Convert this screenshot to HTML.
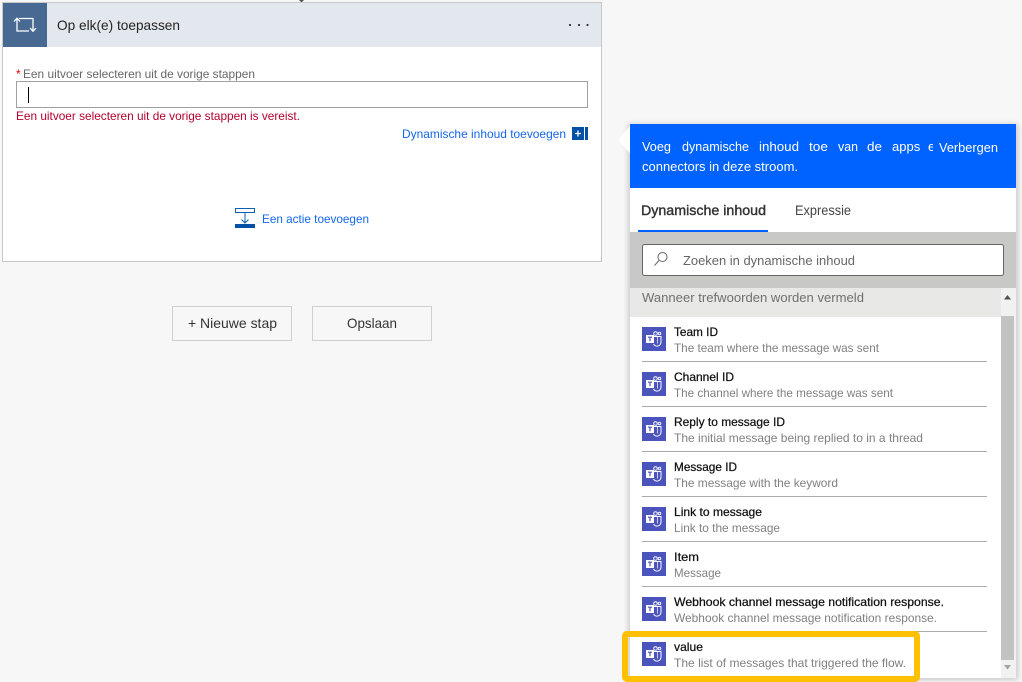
<!DOCTYPE html>
<html lang="nl"><head><meta charset="utf-8"><title>Op elk(e) toepassen</title>
<style>
html,body{margin:0;padding:0;background:#f7f7f7;width:1022px;height:682px;overflow:hidden}
svg{display:block}
text{font-family:"Liberation Sans",sans-serif;font-size:12px}
.h{stroke:#111;stroke-width:.25px}
</style></head><body>
<svg width="1022" height="682" viewBox="0 0 1022 682" xmlns="http://www.w3.org/2000/svg">
<defs>
<filter id="sh" x="-10%" y="-10%" width="120%" height="120%"><feGaussianBlur stdDeviation="3"/></filter>
<g id="t">
<rect width="24" height="24" fill="#4b53bc"/>
<path d="M11 9.500h8v5.500a4 4 0 0 1-7.500 2" fill="none" stroke="#fff" stroke-width="1"/>
<path d="M15.500 9.500v7" fill="none" stroke="#fff" stroke-width=".7"/>
<circle cx="13.500" cy="6.500" r="1.800" fill="none" stroke="#fff" stroke-width="1"/>
<circle cx="17.500" cy="6.500" r="1.300" fill="none" stroke="#fff" stroke-width=".9"/>
<rect x="4" y="8" width="8" height="8" fill="#fff"/>
<path d="M6 10.200h4M8 10.200v4" stroke="#4b53bc" stroke-width="1.200" fill="none"/>
</g>
</defs>
<rect width="1022" height="682" fill="#f7f7f7"/>
<path d="M299 0l2.500 2.500 2.500-2.500z" fill="#555"/>

<!-- card -->
<rect x="2.500" y="2.500" width="599" height="259" fill="#fff" stroke="#c8c8c8"/>
<rect x="3" y="3" width="598" height="44" fill="#e3e7ee"/>
<rect x="3" y="3" width="44" height="44" fill="#486991"/>
<path d="M17 19v12h12M19 18.500h14v12.500" fill="none" stroke="#fff" stroke-width="1.300"/>
<path d="M14 21.500l3-3.300 3 3.300M30 28l3 3.300 3-3.300" fill="none" stroke="#fff" stroke-width="1.300"/>
<text x="57" y="30" style="font-size:14px" fill="#252423" textLength="123" lengthAdjust="spacingAndGlyphs">Op elk(e) toepassen</text>
<circle cx="570" cy="25" r="1.100" fill="#333"/><circle cx="579" cy="25" r="1.100" fill="#333"/><circle cx="587.500" cy="25" r="1.100" fill="#333"/>

<text x="16" y="78" fill="#e00000">*</text>
<text x="23" y="78" fill="#666" textLength="232" lengthAdjust="spacingAndGlyphs">Een uitvoer selecteren uit de vorige stappen</text>
<rect x="16.500" y="81.500" width="571" height="26" fill="#fff" stroke="#a0a0a0"/>
<rect x="28" y="87" width="1" height="16" fill="#000"/>
<text x="16" y="120" fill="#b3002d" textLength="284" lengthAdjust="spacingAndGlyphs">Een uitvoer selecteren uit de vorige stappen is vereist.</text>
<text x="402" y="138" fill="#1566f0" textLength="164" lengthAdjust="spacingAndGlyphs">Dynamische inhoud toevoegen</text>
<rect x="572" y="127" width="12" height="13" fill="#0050a8"/>
<rect x="585" y="127" width="3" height="13" fill="#0050a8"/>
<path d="M575 133.500h6M578 130.500v6" stroke="#fff" stroke-width="1.300"/>

<!-- add action -->
<rect x="235.500" y="208.500" width="19" height="4" fill="#fff" stroke="#0a5fb4"/>
<path d="M245 213v10M241.500 219.500l3.500 3.500 3.500-3.500" fill="none" stroke="#0a5fb4"/>
<rect x="235" y="224" width="20" height="4" fill="#0050a8"/>
<text x="262" y="223" fill="#1566f0" textLength="107" lengthAdjust="spacingAndGlyphs">Een actie toevoegen</text>

<!-- buttons -->
<rect x="172.500" y="306.500" width="119" height="34" fill="#f7f7f7" stroke="#cfcfcf"/>
<rect x="312.500" y="306.500" width="119" height="34" fill="#f7f7f7" stroke="#cfcfcf"/>
<text x="188" y="328" style="font-size:14px" fill="#333" textLength="89" lengthAdjust="spacingAndGlyphs">+ Nieuwe stap</text>
<text x="347" y="328" style="font-size:14px" fill="#333" textLength="50" lengthAdjust="spacingAndGlyphs">Opslaan</text>

<!-- panel -->
<rect x="628" y="124" width="390" height="556" fill="#000" opacity=".18" filter="url(#sh)"/>
<rect x="630" y="124" width="386" height="554" fill="#fff"/>
<path d="M630 126L618 140L630 153z" fill="#fff"/>
<rect x="630" y="124" width="386" height="64" fill="#0062ff"/>
<g fill="#fff">
<text x="642" y="151" style="font-size:13px" textLength="29" lengthAdjust="spacingAndGlyphs">Voeg</text>
<text x="682" y="151" style="font-size:13px" textLength="67" lengthAdjust="spacingAndGlyphs">dynamische</text>
<text x="759" y="151" style="font-size:13px" textLength="40" lengthAdjust="spacingAndGlyphs">inhoud</text>
<text x="809" y="151" style="font-size:13px" textLength="19" lengthAdjust="spacingAndGlyphs">toe</text>
<text x="838" y="151" style="font-size:13px" textLength="20" lengthAdjust="spacingAndGlyphs">van</text>
<text x="867" y="151" style="font-size:13px" textLength="15" lengthAdjust="spacingAndGlyphs">de</text>
<text x="892" y="151" style="font-size:13px">apps</text>
<text x="928" y="151" style="font-size:13px">e</text>
</g>
<rect x="933" y="130" width="80" height="30" fill="#0062ff"/>
<text x="939" y="152" fill="#fff" style="font-size:13px" textLength="59" lengthAdjust="spacingAndGlyphs">Verbergen</text>
<text x="642" y="171" fill="#fff" style="font-size:13px" textLength="156" lengthAdjust="spacingAndGlyphs">connectors in deze stroom.</text>

<text x="641" y="215" style="font-size:14px;stroke:#333;stroke-width:.4px" fill="#333" textLength="125" lengthAdjust="spacingAndGlyphs">Dynamische inhoud</text>
<text x="795" y="215" style="font-size:14px" fill="#444" textLength="56" lengthAdjust="spacingAndGlyphs">Expressie</text>
<rect x="638" y="230" width="130" height="2" fill="#0062ff"/>

<rect x="630" y="232" width="386" height="56" fill="#c8c8c6"/>
<rect x="642.500" y="244.500" width="361" height="31" rx="2" fill="#fff" stroke="#666"/>
<circle cx="662.500" cy="257" r="4.500" fill="none" stroke="#666"/>
<path d="M659 260.500l-4.500 5" stroke="#666" fill="none"/>
<text x="683" y="265" style="font-size:13px" fill="#666" textLength="172" lengthAdjust="spacingAndGlyphs">Zoeken in dynamische inhoud</text>

<rect x="630" y="288" width="371" height="29" fill="#e8e9e7"/>
<text x="642" y="302" style="font-size:13px" fill="#6f6f6f" textLength="222" lengthAdjust="spacingAndGlyphs">Wanneer trefwoorden worden vermeld</text>
<rect x="1001" y="288" width="15" height="390" fill="#f1f1f1"/>
<rect x="1001" y="316" width="13" height="344" fill="#c2c2c2"/>
<path d="M1004 299.500l3.500-4.500 3.500 4.500z" fill="#505050"/>
<path d="M1004 665l3.500 4.500 3.500-4.500z" fill="#a3a3a3"/>

<!-- items -->
<use href="#t" x="642" y="327"/>
<text class="h" x="674" y="336" fill="#111" textLength="44" lengthAdjust="spacingAndGlyphs">Team ID</text>
<text x="674" y="352" fill="#808080" textLength="205" lengthAdjust="spacingAndGlyphs">The team where the message was sent</text>
<rect x="642" y="361" width="345" height="1" fill="#aaa"/>

<use href="#t" x="642" y="372"/>
<text class="h" x="674" y="381" fill="#111" textLength="60" lengthAdjust="spacingAndGlyphs">Channel ID</text>
<text x="674" y="397" fill="#808080" textLength="219" lengthAdjust="spacingAndGlyphs">The channel where the message was sent</text>
<rect x="642" y="406" width="345" height="1" fill="#aaa"/>

<use href="#t" x="642" y="417"/>
<text class="h" x="674" y="426" fill="#111" textLength="111" lengthAdjust="spacingAndGlyphs">Reply to message ID</text>
<text x="674" y="442" fill="#808080" textLength="249" lengthAdjust="spacingAndGlyphs">The initial message being replied to in a thread</text>
<rect x="642" y="451" width="345" height="1" fill="#aaa"/>

<use href="#t" x="642" y="462"/>
<text class="h" x="674" y="471" fill="#111" textLength="63" lengthAdjust="spacingAndGlyphs">Message ID</text>
<text x="674" y="487" fill="#808080" textLength="164" lengthAdjust="spacingAndGlyphs">The message with the keyword</text>
<rect x="642" y="496" width="345" height="1" fill="#aaa"/>

<use href="#t" x="642" y="507"/>
<text class="h" x="674" y="516" fill="#111" textLength="88" lengthAdjust="spacingAndGlyphs">Link to message</text>
<text x="674" y="532" fill="#808080" textLength="106" lengthAdjust="spacingAndGlyphs">Link to the message</text>
<rect x="642" y="541" width="345" height="1" fill="#aaa"/>

<use href="#t" x="642" y="552"/>
<text class="h" x="674" y="561" fill="#111" textLength="25" lengthAdjust="spacingAndGlyphs">Item</text>
<text x="674" y="577" fill="#808080" textLength="47" lengthAdjust="spacingAndGlyphs">Message</text>
<rect x="642" y="586" width="345" height="1" fill="#aaa"/>

<use href="#t" x="642" y="597"/>
<text class="h" x="674" y="606" fill="#111" textLength="270" lengthAdjust="spacingAndGlyphs">Webhook channel message notification response.</text>
<text x="674" y="622" fill="#808080" textLength="263" lengthAdjust="spacingAndGlyphs">Webhook channel message notification response.</text>
<rect x="642" y="631" width="345" height="1" fill="#aaa"/>

<use href="#t" x="642" y="642"/>
<text class="h" x="674" y="651" fill="#111" textLength="29" lengthAdjust="spacingAndGlyphs">value</text>
<text x="674" y="667" fill="#808080" textLength="232" lengthAdjust="spacingAndGlyphs">The list of messages that triggered the flow.</text>

<!-- highlight -->
<rect x="625" y="634" width="292" height="45" rx="2" fill="none" stroke="#ffc000" stroke-width="6"/>
</svg>
</body></html>
